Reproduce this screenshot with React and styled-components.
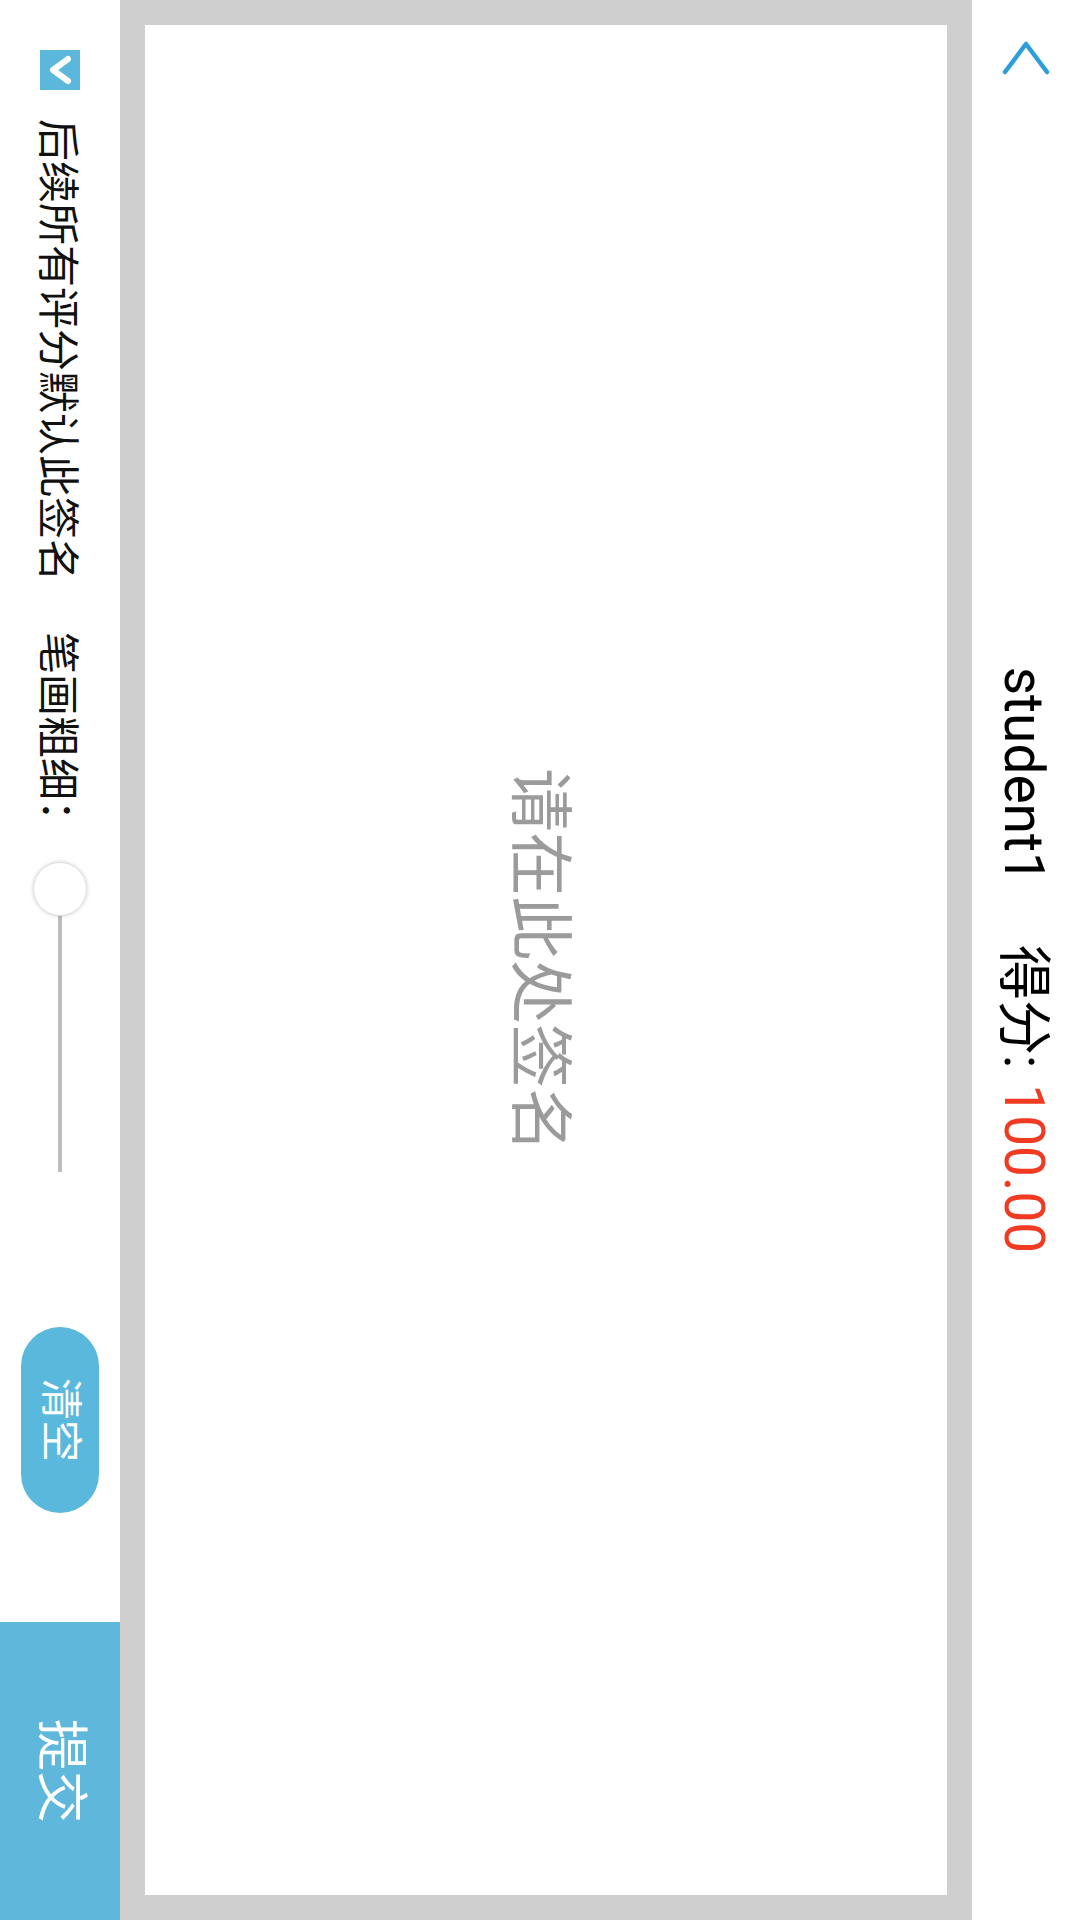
import React from "react";
import styled, { createGlobalStyle } from "styled-components";

const Global = createGlobalStyle`
  html, body { margin: 0; padding: 0; overflow: hidden; background: #fff; }
  body { font-family: Roboto, "Noto Sans CJK SC", sans-serif; }
`;

const Stage = styled.div`
  width: 1080px;
  height: 1920px;
  overflow: hidden;
  position: relative;
  background: #fff;
`;

const Landscape = styled.div`
  width: 1920px;
  height: 1080px;
  display: flex;
  flex-direction: column;
  background: #fff;
  transform-origin: 0 0;
  transform: translateX(1080px) rotate(90deg);
  font-family: Roboto, "Noto Sans CJK SC", sans-serif;
`;

const Header = styled.header`
  height: 108px;
  flex: none;
  display: grid;
  grid-template-columns: 1fr auto 1fr;
  align-items: center;
`;

const BackButton = styled.button`
  justify-self: start;
  margin-left: 38px;
  width: 40px;
  height: 50px;
  padding: 0;
  border: 0;
  background: transparent;
  display: flex;
  align-items: center;
  justify-content: center;
`;

const Title = styled.div`
  display: flex;
  align-items: baseline;
  font-size: 55px;
  line-height: 1;
  color: #000;
  white-space: nowrap;
  padding-top: 4px;
`;

const Name = styled.span`
  margin-right: 62px;
`;

const Score = styled.span`
  color: #f03a22;
  margin-left: 16px;
`;

const Pad = styled.main`
  flex: 1;
  background: #cfcfcf;
  padding: 25px;
  display: flex;
`;

const Canvas = styled.div`
  flex: 1;
  background: #fff;
  display: flex;
  align-items: center;
  justify-content: center;
`;

const Placeholder = styled.div`
  font-size: 64px;
  line-height: 1;
  color: #9b9b9b;
  padding-top: 14px;
`;

const Toolbar = styled.footer`
  height: 120px;
  flex: none;
  display: flex;
  align-items: center;
  padding-left: 50px;
`;

const CheckBox = styled.div`
  width: 40px;
  height: 40px;
  background: #5bb8dc;
  flex: none;
  display: flex;
  align-items: center;
  justify-content: center;
`;

const Label = styled.span`
  font-size: 42px;
  line-height: 1;
  color: #111;
  white-space: nowrap;
  margin-left: ${(p) => p.$gap || 0}px;
  padding-top: 6px;
`;

const Slider = styled.div`
  position: relative;
  width: 318px;
  height: 58px;
  margin-left: 18px;
  flex: none;
`;

const Track = styled.div`
  position: absolute;
  left: 29px;
  right: 6px;
  top: 27px;
  height: 4px;
  background: #bdbdbd;
`;

const Thumb = styled.div`
  position: absolute;
  left: 2px;
  top: 2px;
  width: 54px;
  height: 54px;
  border-radius: 50%;
  background: #fff;
  border: 1px solid #e0e0e0;
  box-sizing: border-box;
  box-shadow: 0 0 4px rgba(0, 0, 0, 0.18);
`;

const ClearButton = styled.button`
  margin-left: 149px;
  width: 186px;
  height: 78px;
  border-radius: 39px;
  border: 0;
  background: #5ab8dd;
  color: #fff;
  font-family: Roboto, "Noto Sans CJK SC", sans-serif;
  font-size: 42px;
  line-height: 1;
  padding: 0;
  flex: none;
`;

const SubmitButton = styled.button`
  margin-left: auto;
  width: 298px;
  height: 120px;
  border: 0;
  background: #5fb8dc;
  color: #fff;
  font-family: Roboto, "Noto Sans CJK SC", sans-serif;
  font-size: 52px;
  line-height: 1;
  padding: 0;
  flex: none;
`;

export default function App() {
  return (
    <Stage>
      <Global />
      <Landscape>
        <Header>
          <BackButton aria-label="返回">
            <svg width="36" height="50" viewBox="0 0 36 50">
              <polyline
                points="32,4 4,25 32,46"
                fill="none"
                stroke="#2c9fd8"
                strokeWidth="4.5"
                strokeLinecap="round"
                strokeLinejoin="round"
              />
            </svg>
          </BackButton>
          <Title>
            <Name>student1</Name>
            <span>得分:</span>
            <Score>100.00</Score>
          </Title>
          <span />
        </Header>
        <Pad>
          <Canvas>
            <Placeholder>请在此处签名</Placeholder>
          </Canvas>
        </Pad>
        <Toolbar>
          <CheckBox>
            <svg width="40" height="40" viewBox="0 0 40 40">
              <polyline
                points="9,12 20,27 31,12"
                fill="none"
                stroke="#fff"
                strokeWidth="6"
                strokeLinecap="round"
                strokeLinejoin="round"
              />
            </svg>
          </CheckBox>
          <Label $gap={29}>后续所有评分默认此签名</Label>
          <Label $gap={51}>笔画粗细：</Label>
          <Slider>
            <Track />
            <Thumb />
          </Slider>
          <ClearButton>清空</ClearButton>
          <SubmitButton>提交</SubmitButton>
        </Toolbar>
      </Landscape>
    </Stage>
  );
}
